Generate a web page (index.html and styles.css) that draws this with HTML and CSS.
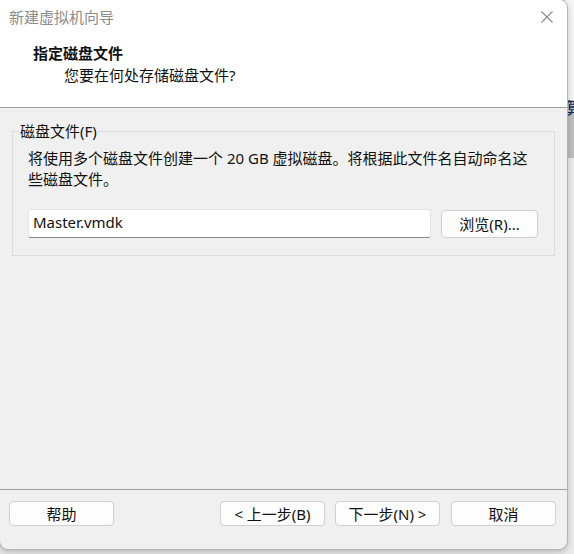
FILE: index.html
```html
<!DOCTYPE html>
<html lang="zh-CN">
<head>
<meta charset="utf-8">
<title>新建虚拟机向导</title>
<link rel="stylesheet" href="styles.css">
</head>
<body>
<div class="strip"><span class="strip-glyph">算</span></div>
<div class="window">
  <div class="header">
    <div class="titlebar">
      <span class="title">新建虚拟机向导</span>
      <svg class="close" width="12" height="12" viewBox="0 0 12 12"><path d="M0.5 0.5L11.5 11.5M11.5 0.5L0.5 11.5" stroke="#8a8a8a" stroke-width="1.1" fill="none"/></svg>
    </div>
    <div class="heading">指定磁盘文件</div>
    <div class="sub">您要在何处存储磁盘文件?</div>
  </div>
  <div class="content">
    <fieldset class="group">
      <legend class="legend">磁盘文件(F)</legend>
      <p class="desc">将使用多个磁盘文件创建一个 20 GB 虚拟磁盘。将根据此文件名自动命名这<br>些磁盘文件。</p>
      <div class="row">
        <div class="field">Master.vmdk</div>
        <button class="btn browse">浏览(R)...</button>
      </div>
    </fieldset>
  </div>
  <div class="footer">
    <button class="btn fbtn">帮助</button>
    <button class="btn fbtn back">&lt; 上一步(B)</button>
    <button class="btn fbtn">下一步(N) &gt;</button>
    <button class="btn fbtn cancel">取消</button>
  </div>
</div>
</body>
</html>
```
FILE: styles.css
```css
html, body {
  margin: 0;
  padding: 0;
}
body {
  width: 574px;
  height: 554px;
  overflow: hidden;
  position: relative;
  background: #e6e6e6;
  font-family: "Noto Sans", "Noto Sans CJK SC", sans-serif;
  font-size: 15px;
  color: #111;
}
.strip {
  position: absolute;
  left: 566px;
  top: 0;
  width: 8px;
  height: 554px;
  overflow: hidden;
  background: linear-gradient(to bottom, #f4f4f4 0, #f4f4f4 100px, #bdbdbd 100px, #bdbdbd 158px, #e9e9e9 158px);
}
.strip-glyph {
  position: absolute;
  left: 0;
  top: 97px;
  font-size: 16px;
  line-height: 20px;
  color: #102a55;
  font-family: "Noto Sans CJK SC", sans-serif;
}
.window {
  position: relative;
  z-index: 1;
  width: 567px;
  height: 549px;
  background: #f0f0f0;
  border-radius: 0 8px 8px 8px;
  box-shadow: 0 0 0 1px #b4b4b4, 0 2px 6px rgba(0, 0, 0, 0.25);
  display: flex;
  flex-direction: column;
  overflow: hidden;
}
.header {
  flex: none;
  height: 107px;
  background: #fff;
  border-bottom: 1px solid #a0a0a0;
}
.titlebar {
  height: 34px;
  display: flex;
  align-items: center;
  justify-content: space-between;
  padding: 0 14px 0 9px;
}
.title {
  color: #8c8c8c;
  line-height: 20px;
}
.close {
  display: block;
}
.heading {
  margin: 8px 0 0 33px;
  font-weight: bold;
  line-height: 22px;
}
.sub {
  margin-left: 64px;
  line-height: 22px;
}
.content {
  flex: 1;
  padding: 13px 12px 0;
}
.group {
  margin: 0;
  min-width: 0;
  border: 1px solid #dcdcdc;
  padding: 7px 16px 17px 15px;
}
.legend {
  padding: 0 1px;
  margin-left: -9px;
  line-height: 20px;
}
.desc {
  margin: 0;
  line-height: 21px;
}
.row {
  display: flex;
  align-items: flex-start;
  gap: 10px;
  margin-top: 19px;
}
.field {
  width: 403px;
  height: 29px;
  box-sizing: border-box;
  background: #fff;
  border: 1px solid #e4e4e4;
  border-bottom-color: #868686;
  border-radius: 3px;
  padding: 0 4px;
  line-height: 25px;
}
.btn {
  box-sizing: border-box;
  margin: 0;
  padding: 0;
  background: #fdfdfd;
  border: 1px solid #d0d0d0;
  border-radius: 4px;
  font: inherit;
  color: #111;
  line-height: 20px;
}
.browse {
  width: 97px;
  height: 28px;
  margin-top: 1px;
}
.footer {
  flex: none;
  height: 48px;
  border-top: 1px solid #a0a0a0;
  display: flex;
  align-items: flex-start;
  gap: 10px;
  padding: 11px 11px 0 9px;
}
.fbtn {
  width: 105px;
  height: 25px;
}
.back {
  margin-left: auto;
}
.cancel {
  margin-left: 1px;
}
```
